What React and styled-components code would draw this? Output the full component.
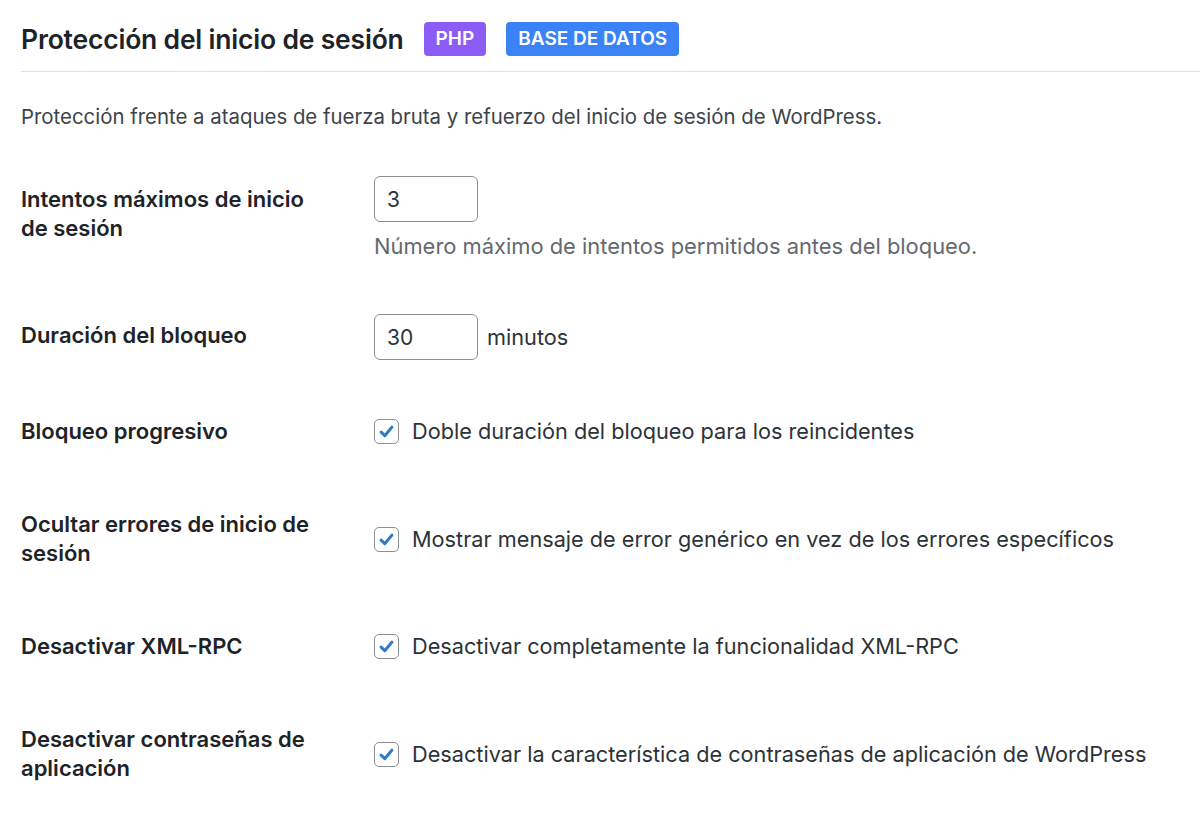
import React from 'react';
import styled, { createGlobalStyle } from 'styled-components';

const GlobalStyle = createGlobalStyle`
  html, body {
    margin: 0;
    padding: 0;
    background: #fff;
  }
  body {
    font-family: Inter, "Noto Sans", "Liberation Sans", sans-serif;
    color: #1d2327;
    overflow: hidden;
  }
`;

const Panel = styled.div`
  padding: 0 0 0 21px;
`;

const Header = styled.div`
  display: flex;
  align-items: center;
  gap: 20px;
  height: 72px;
  padding-top: 6px;
  box-sizing: border-box;
  border-bottom: 1.5px solid #e3e3e5;
`;

const Title = styled.h2`
  margin: 0;
  font-size: 26.5px;
  font-weight: 600;
  color: #1d2327;
  letter-spacing: -0.2px;
`;

const Badge = styled.span`
  display: inline-flex;
  align-items: center;
  height: 34px;
  padding: 0 12px;
  border-radius: 4px;
  background: ${p => p.$color};
  color: #fff;
  font-size: 19px;
  font-weight: 600;
`;

const Intro = styled.p`
  margin: 31px 0 0;
  font-size: 20.4px;
  line-height: 28px;
  color: #3c434a;
`;

const Table = styled.div`
  display: grid;
  grid-template-columns: 353px 1fr;
  margin-top: 22px;
`;

const Label = styled.div`
  padding: 32px 43px 32px 0;
  font-size: 22px;
  font-weight: 600;
  line-height: 29px;
  color: #1d2327;
`;

const Field = styled.div`
  display: flex;
  flex-direction: column;
  justify-content: center;
  padding: ${p => (p.$first ? '23px 0 28px' : '25px 0')};
`;

const Line = styled.div`
  display: flex;
  align-items: center;
  gap: 9px;
  font-size: 21.7px;
  line-height: 29px;
  color: #2c3338;
  white-space: nowrap;
`;

const NumberInput = styled.input`
  box-sizing: border-box;
  width: 104px;
  height: 46px;
  padding: 0 12px;
  border: 1.5px solid #8c8f94;
  border-radius: 6px;
  font-family: inherit;
  font-size: 21px;
  color: #2c3338;
  background: #fff;
  outline: none;
`;

const Help = styled.p`
  margin: 10px 0 0;
  font-size: 21.9px;
  line-height: 29px;
  color: #646970;
  white-space: nowrap;
`;

const Box = styled.span`
  box-sizing: border-box;
  display: inline-flex;
  align-items: center;
  justify-content: center;
  width: 25px;
  height: 25px;
  margin-right: 4px;
  border: 1.5px solid #8c8f94;
  border-radius: 5px;
  background: #fff;
  flex-shrink: 0;
`;

const Check = () => (
  <Box>
    <svg width="19" height="19" viewBox="0 0 20 20">
      <path
        d="M4.3 10.6 L8.2 14.4 L15.7 5.4"
        fill="none"
        stroke="#2f7bc4"
        strokeWidth="3.2"
        strokeLinecap="round"
        strokeLinejoin="round"
      />
    </svg>
  </Box>
);

const toggles = [
  ['Bloqueo progresivo', 'Doble duración del bloqueo para los reincidentes'],
  ['Ocultar errores de inicio de sesión', 'Mostrar mensaje de error genérico en vez de los errores específicos'],
  ['Desactivar XML-RPC', 'Desactivar completamente la funcionalidad XML-RPC'],
  ['Desactivar contraseñas de aplicación', 'Desactivar la característica de contraseñas de aplicación de WordPress'],
];

export default function App() {
  return (
    <Panel>
      <GlobalStyle />
      <Header>
        <Title>Protección del inicio de sesión</Title>
        <Badge $color="#8b5cf6">PHP</Badge>
        <Badge $color="#3b82f6">BASE DE DATOS</Badge>
      </Header>
      <Intro>
        Protección frente a ataques de fuerza bruta y refuerzo del inicio de sesión de WordPress.
      </Intro>
      <Table>
        <Label>Intentos máximos de inicio de sesión</Label>
        <Field $first>
          <Line>
            <NumberInput type="text" defaultValue="3" />
          </Line>
          <Help>Número máximo de intentos permitidos antes del bloqueo.</Help>
        </Field>

        <Label>Duración del bloqueo</Label>
        <Field>
          <Line>
            <NumberInput type="text" defaultValue="30" />
            minutos
          </Line>
        </Field>

        {toggles.map(([label, text]) => (
          <React.Fragment key={label}>
            <Label>{label}</Label>
            <Field>
              <Line>
                <Check />
                {text}
              </Line>
            </Field>
          </React.Fragment>
        ))}
      </Table>
    </Panel>
  );
}
